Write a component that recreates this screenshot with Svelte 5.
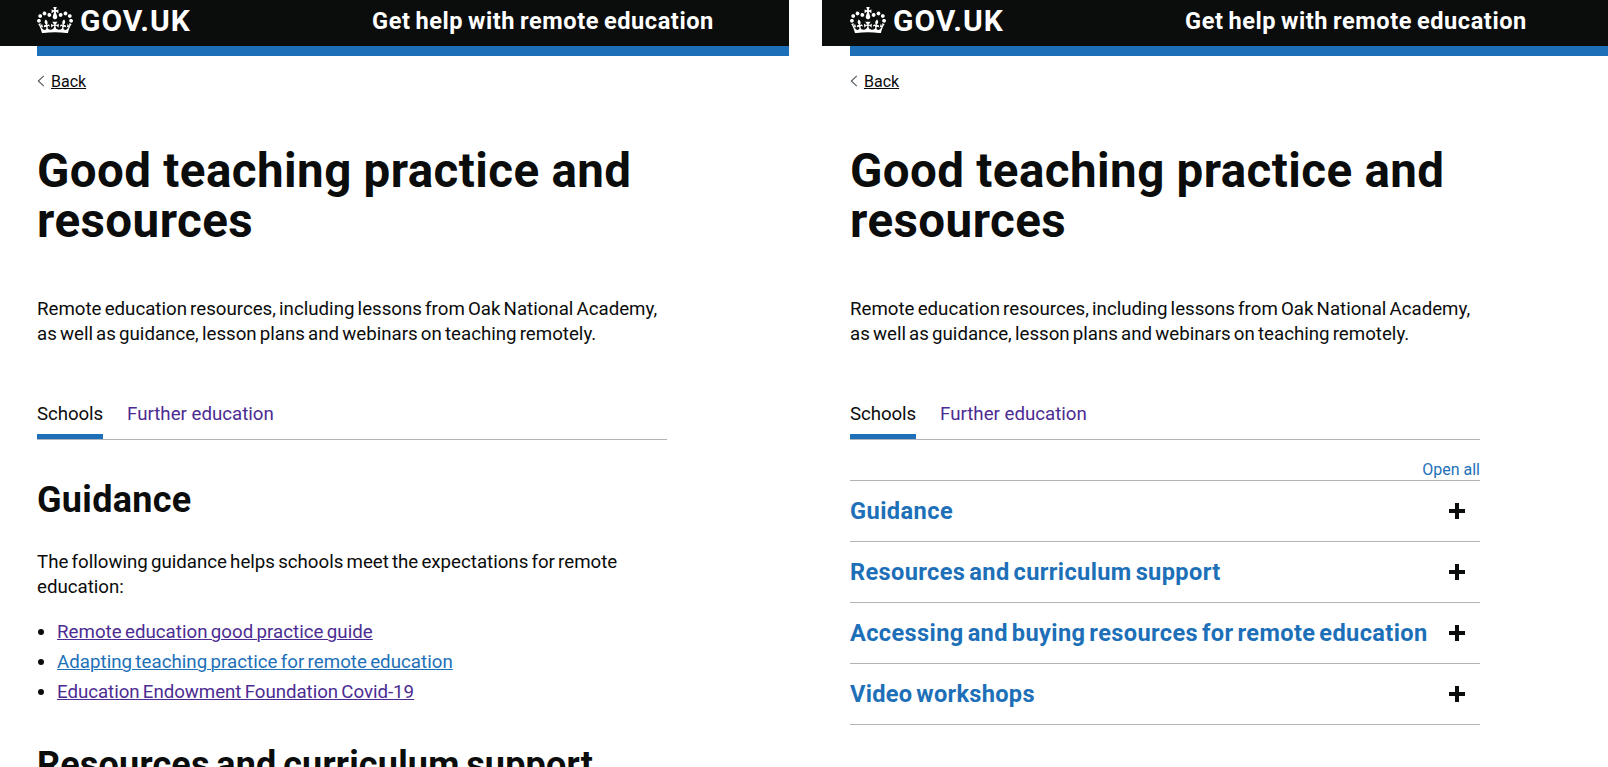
<script>
  const intro = [
    'Remote education resources, including lessons from Oak National Academy,',
    'as well as guidance, lesson plans and webinars on teaching remotely.'
  ];
  const guidance = [
    'The following guidance helps schools meet the expectations for remote',
    'education:'
  ];
  const links = [
    { text: 'Remote education good practice guide', visited: true, ls: 0.03 },
    { text: 'Adapting teaching practice for remote education', visited: false, ls: 0.03 },
    { text: 'Education Endowment Foundation Covid-19', visited: true, ls: -0.03 }
  ];
  const sections = [
    { text: 'Guidance', ls: 0.43 },
    { text: 'Resources and curriculum support', ls: 0.36 },
    { text: 'Accessing and buying resources for remote education', ls: 0.36 },
    { text: 'Video workshops', ls: 0.28 }
  ];
</script>

{#snippet top()}
  <header>
    <svg class="crown" viewBox="0 0 132 97" aria-hidden="true"><path fill="currentColor" fill-rule="evenodd" d="M25 30.2c3.5 1.5 7.7-.2 9.1-3.7 1.5-3.6-.2-7.8-3.9-9.2-3.6-1.4-7.6.3-9.1 3.9-1.4 3.5.3 7.5 3.9 9zM9 39.5c3.6 1.5 7.8-.2 9.2-3.7 1.5-3.6-.2-7.8-3.9-9.1-3.6-1.5-7.6.2-9.1 3.8-1.4 3.5.3 7.5 3.8 9zM4.4 57.2c3.5 1.5 7.7-.2 9.1-3.8 1.5-3.6-.2-7.7-3.9-9.1-3.5-1.5-7.6.3-9.1 3.8-1.4 3.5.3 7.6 3.9 9.1zm38.3-21.4c3.5 1.5 7.7-.2 9.1-3.8 1.5-3.6-.2-7.7-3.9-9.1-3.6-1.5-7.6.3-9.1 3.8-1.3 3.6.4 7.7 3.9 9.1zm64.4-5.6c-3.6 1.5-7.8-.2-9.1-3.7-1.5-3.6.2-7.8 3.8-9.2 3.6-1.4 7.7.3 9.2 3.9 1.3 3.5-.4 7.5-3.9 9zm15.9 9.3c-3.6 1.5-7.7-.2-9.1-3.7-1.5-3.6.2-7.8 3.7-9.1 3.6-1.5 7.7.2 9.2 3.8 1.5 3.5-.3 7.5-3.8 9zm4.7 17.7c-3.6 1.5-7.8-.2-9.2-3.8-1.5-3.6.2-7.7 3.9-9.1 3.6-1.5 7.7.3 9.2 3.8 1.3 3.5-.4 7.6-3.9 9.1zM89.3 35.8c-3.6 1.5-7.8-.2-9.2-3.8-1.4-3.6.2-7.7 3.9-9.1 3.6-1.5 7.7.3 9.2 3.8 1.4 3.6-.3 7.7-3.9 9.1zM69.7 17.7l8.9 4.7V9.3l-8.9 2.8c-.2-.3-.5-.6-.9-.9L72.4 0H59.6l3.5 11.2c-.3.3-.6.5-.9.9l-8.8-2.8v13.1l8.8-4.7c.3.3.6.7.9.9l-5 15.4v.1c-.2.8-.4 1.6-.4 2.4 0 4.1 3.1 7.5 7 8.1h.2c.3 0 .7.1 1 .1.4 0 .7 0 1-.1h.2c4-.6 7.1-4.1 7.1-8.1 0-.8-.1-1.7-.4-2.4V34l-5.1-15.4c.4-.2.7-.6 1-.9zM66 92.8c16.9 0 32.8 1.1 47.1 3.2 4-16.9 8.9-26.7 14-33.5l-9.6-3.4c1 4.9 1.1 7.2 0 10.2-1.5-1.4-3-4.3-4.2-8.7L108.6 76c2.8-2 5-3.2 7.5-3.3-4.4 9.4-10 11.9-13.6 11.2-4.3-.8-6.3-4.6-5.6-7.9 1-4.7 5.7-5.9 8-.5 4.3-8.7-3-11.4-7.6-8.8 7.1-7.2 7.9-13.5 2.1-21.1-8 6.1-8.1 12.3-4.5 20.8-4.7-5.4-12.1-2.5-9.5 6.2 3.4-5.2 7.9-2 7.2 3.1-.6 4.3-6.4 7.8-13.5 7.2-10.3-.9-10.9-8-11.2-13.8 2.5-.5 7.1 1.8 11 7.3L80.2 60c-4.1 4.4-8 5.3-12.3 5.4 1.4-4.4 8-11.6 8-11.6H55.5s6.4 7.2 7.9 11.6c-4.2-.1-8-1-12.3-5.4l1.4 16.4c3.9-5.5 8.5-7.7 10.9-7.3-.3 5.8-.9 12.8-11.1 13.8-7.2.6-12.9-2.9-13.5-7.2-.7-5 3.8-8.3 7.1-3.1 2.7-8.7-4.6-11.6-9.4-6.2 3.7-8.5 3.6-14.7-4.6-20.8-5.8 7.6-5 13.9 2.2 21.1-4.7-2.6-11.9.1-7.7 8.8 2.3-5.5 7.1-4.2 8.1.5.7 3.3-1.3 7.1-5.7 7.9-3.5.7-9-1.8-13.5-11.2 2.5.1 4.7 1.3 7.5 3.3l-4.7-15.4c-1.2 4.4-2.7 7.2-4.3 8.7-1.1-3-.9-5.3 0-10.2l-9.5 3.4c5 6.9 9.9 16.7 14 33.5 14.8-2.1 30.8-3.2 47.7-3.2z"/></svg>
    <span class="logo">GOV.UK</span>
    <span class="service">Get help with remote education</span>
  </header>
  <div class="bar"></div>
  <a class="back" href="#back">
    <svg width="8" height="12" viewBox="0 0 8 12" aria-hidden="true"><path d="M6.8.8 1.3 6l5.5 5.2" fill="none" stroke="#505a5f" stroke-width="1.1"/></svg>
    <span>Back</span>
  </a>
  <h1><span>Good teaching practice and</span><span>resources</span></h1>
  <p class="intro">
    {#each intro as line}<span>{line}</span>{/each}
  </p>
  <nav>
    <a class="tab on" href="#schools">Schools</a>
    <a class="tab fe" href="#fe">Further education</a>
  </nav>
{/snippet}

<div class="board">
  <section class="page left">
    {@render top()}
    <h2>Guidance</h2>
    <p class="lead">
      {#each guidance as line}<span>{line}</span>{/each}
    </p>
    <ul>
      {#each links as link}
        <li><a class:visited={link.visited} href="#link" style:letter-spacing="{link.ls}px">{link.text}</a></li>
      {/each}
    </ul>
    <h2 class="second">Resources and curriculum support</h2>
  </section>
  <section class="page right">
    {@render top()}
    <div class="controls"><button>Open all</button></div>
    <div class="accordion">
      {#each sections as section}
        <div class="row">
          <h3 style:letter-spacing="{section.ls}px">{section.text}</h3>
          <svg width="16" height="16" viewBox="0 0 16 16" aria-hidden="true"><path d="M6 0h4v6h6v4h-6v6H6v-6H0V6h6z" fill="#0b0c0c"/></svg>
        </div>
      {/each}
    </div>
  </section>
</div>

<style>
  :global(body) { background: #fff; overflow: hidden; }
  .board {
    display: flex;
    justify-content: space-between;
    width: 1608px;
    height: 767px;
    overflow: hidden;
    color: #0b0c0c;
    font-family: Roboto, "Liberation Sans", sans-serif;
    font-size: 18.7px;
    line-height: 25px;
    white-space: nowrap;
  }
  .page { --gutter: 37px; height: 767px; overflow: hidden; box-sizing: border-box; }
  .left { width: 789px; }
  .right { --gutter: 28px; width: 786px; }
  .page > :global(*) { margin-left: var(--gutter); }
  header {
    display: flex;
    align-items: flex-start;
    height: 46px;
    margin-left: 0 !important;
    padding-left: var(--gutter);
    background: #0b0c0c;
    color: #fff;
    font-weight: 700;
  }
  .crown { width: 36px; height: 26.5px; margin-top: 6.5px; flex: none; }
  .logo { width: 292px; padding-left: 7px; box-sizing: border-box; font-size: 30px; line-height: 42px; letter-spacing: 1px; }
  .service { padding-left: 7px; font-size: 23.6px; line-height: 42px; letter-spacing: 0.56px; word-spacing: -1.5px; }
  .bar { height: 10px; background: #1d70b8; }
  .back { display: flex; align-items: center; gap: 6px; margin-top: 15px; height: 20px; font-size: 16px; line-height: 20px; color: #0b0c0c; text-decoration: none; }
  .back span { padding-top: 1px; text-decoration: underline; text-decoration-thickness: 1px; text-underline-offset: 1px; }
  h1, h2, h3, p, ul { margin-top: 0; margin-bottom: 0; padding: 0; }
  h1 { margin-top: 55px; font-size: 47.5px; line-height: 50px; letter-spacing: 0.45px; word-spacing: -0.5px; }
  h1 span, p span { display: block; }
  p { word-spacing: -1.5px; }
  .intro { margin-top: 51px; }
  nav { display: flex; gap: 24px; width: 630px; margin-top: 55px; border-bottom: 1px solid #b1b4b6; }
  .tab { padding-bottom: 7px; border-bottom: 5px solid transparent; color: #4c2c92; text-decoration: none; }
  .on { width: 66px; color: #0b0c0c; border-color: #1d70b8; }
  .on { letter-spacing: -0.08px; }
  h2 { margin-top: 40px; font-size: 36px; line-height: 40px; letter-spacing: 0.3px; }
  .lead { margin-top: 30px; }
  ul { display: grid; gap: 5px; margin-top: 20px; list-style: none; word-spacing: -1.4px; }
  li { display: flex; align-items: center; height: 25px; }
  li::before { content: ""; width: 6px; height: 6px; margin: -1px 13px 0 1px; border-radius: 50%; background: #0b0c0c; }
  li a { color: #1d70b8; text-decoration-thickness: 1px; text-underline-offset: 1px; }
  li a.visited { color: #4c2c92; }
  .second { margin-top: 40px; letter-spacing: 0.18px; word-spacing: -2.5px; }
  .controls { display: flex; justify-content: flex-end; width: 630px; height: 40px; align-items: flex-end; }
  button { border: 0; padding: 0; margin: 0; background: none; color: #1d70b8; font: 16px/20px Roboto, sans-serif; }
  .accordion { width: 630px; border-top: 1px solid #b1b4b6; }
  .row { display: flex; align-items: center; justify-content: space-between; height: 60px; padding-right: 15px; border-bottom: 1px solid #b1b4b6; }
  h3 { font-size: 23.6px; line-height: 30px; color: #1d70b8; word-spacing: -2.2px; }
</style>
